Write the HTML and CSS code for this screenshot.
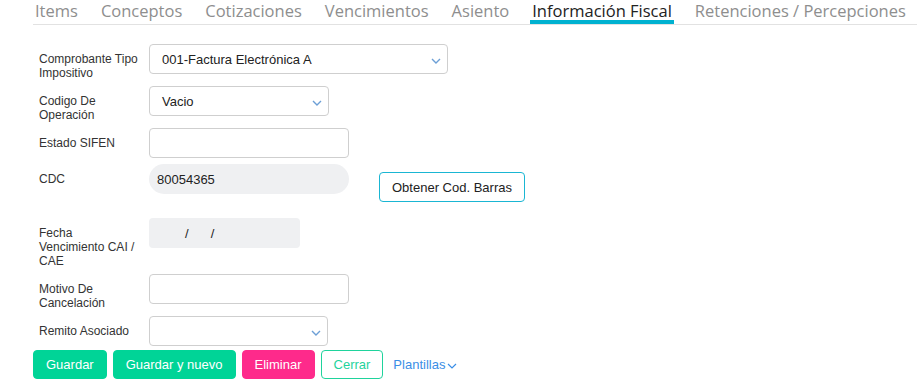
FILE: index.html
```html
<!DOCTYPE html>
<html lang="es">
<head>
<meta charset="utf-8">
<title>Información Fiscal</title>
<link rel="stylesheet" href="styles.css">
</head>
<body>
<div class="page">
  <nav class="tabs">
    <a class="tab">Items</a>
    <a class="tab">Conceptos</a>
    <a class="tab">Cotizaciones</a>
    <a class="tab">Vencimientos</a>
    <a class="tab">Asiento</a>
    <a class="tab active">Información Fiscal</a>
    <a class="tab">Retenciones / Percepciones</a>
  </nav>

  <div class="form">
    <div class="row">
      <label class="lbl">Comprobante Tipo Impositivo</label>
      <div class="field select w299">
        <span class="val">001-Factura Electrónica A</span>
        <svg class="chev" width="10" height="6" viewBox="0 0 10 6"><polyline points="1,1 5,5 9,1" fill="none" stroke="#6c9fd6" stroke-width="1.4"/></svg>
      </div>
    </div>
    <div class="row">
      <label class="lbl">Codigo De Operación</label>
      <div class="field select w180">
        <span class="val">Vacio</span>
        <svg class="chev" width="10" height="6" viewBox="0 0 10 6"><polyline points="1,1 5,5 9,1" fill="none" stroke="#6c9fd6" stroke-width="1.4"/></svg>
      </div>
    </div>
    <div class="row">
      <label class="lbl">Estado SIFEN</label>
      <div class="field w200"></div>
    </div>
    <div class="row row-cdc">
      <label class="lbl">CDC</label>
      <div class="field pill w200"><span class="val">80054365</span></div>
      <button class="btn-outline-cyan">Obtener Cod. Barras</button>
    </div>
    <div class="row">
      <label class="lbl">Fecha Vencimiento CAI / CAE</label>
      <div class="field filled w151"><span class="slash s1">/</span><span class="slash s2">/</span></div>
    </div>
    <div class="row">
      <label class="lbl">Motivo De Cancelación</label>
      <div class="field w200"></div>
    </div>
    <div class="row">
      <label class="lbl">Remito Asociado</label>
      <div class="field select w179">
        <span class="val"></span>
        <svg class="chev" width="10" height="6" viewBox="0 0 10 6"><polyline points="1,1 5,5 9,1" fill="none" stroke="#6c9fd6" stroke-width="1.4"/></svg>
      </div>
    </div>
  </div>

  <div class="actions">
    <button class="btn green">Guardar</button>
    <button class="btn green">Guardar y nuevo</button>
    <button class="btn pink">Eliminar</button>
    <button class="btn outline-green">Cerrar</button>
    <a class="link">Plantillas<svg class="lchev" width="10" height="6" viewBox="0 0 10 6"><polyline points="1,1 5,5 9,1" fill="none" stroke="#3a8ee6" stroke-width="1.2"/></svg></a>
  </div>
</div>
</body>
</html>
```

FILE: styles.css
```css
* { box-sizing: border-box; }
html, body { margin: 0; padding: 0; background: #fff; }
body { font-family: "Liberation Sans", Arial, sans-serif; color: #333; }

.page { padding-left: 33px; }

.tabs {
  display: flex;
  gap: 19px;
  height: 25px;
  border-bottom: 1px solid #e2e2e2;
  font-family: "Open Sans", "Noto Sans", sans-serif;
  font-size: 16.5px;
}
.tab {
  display: block;
  height: 24px;
  padding: 0 2px;
  line-height: 22px;
  color: #8e8e8e;
  white-space: nowrap;
}
.tab.active {
  color: #222;
  box-shadow: inset 0 -4px 0 #00b1d0;
}

.form {
  display: flex;
  flex-direction: column;
  gap: 6px;
  padding-top: 19px;
}
.row { display: flex; align-items: flex-start; }
.row-cdc { margin-bottom: 10px; }

.lbl {
  width: 101px;
  margin-left: 6px;
  margin-right: 9px;
  padding-top: 8px;
  font-size: 12px;
  line-height: 14px;
  color: #333;
}

.field {
  position: relative;
  height: 30px;
  border: 1px solid #cfcfcf;
  border-radius: 4px;
  background: #fff;
  display: flex;
  align-items: center;
  padding-left: 12px;
  font-size: 13px;
  color: #222;
}
.select { justify-content: space-between; padding-right: 6px; }
.chev { margin-top: 3px; }
.pill {
  border: none;
  border-radius: 15px;
  background: #eff0f2;
  padding-left: 8px;
}
.filled {
  border: none;
  background: #eff0f2;
  padding-left: 36px;
}
.slash { font-size: 13px; color: #222; }
.s2 { margin-left: 22px; }

.w299 { width: 299px; }
.w180 { width: 180px; }
.w179 { width: 179px; }
.w200 { width: 200px; }
.w151 { width: 151px; }

.btn-outline-cyan {
  margin-left: 30px;
  margin-top: 8px;
  height: 30px;
  padding: 0 12px;
  border: 1px solid #1ab6d3;
  border-radius: 4px;
  background: #fff;
  font-family: "Liberation Sans", Arial, sans-serif;
  font-size: 13px;
  color: #222;
}

.actions {
  display: flex;
  align-items: center;
  gap: 6px;
  margin-top: 4px;
}
.btn {
  height: 29px;
  padding: 0 12px;
  border: 1px solid transparent;
  border-radius: 4px;
  font-family: "Liberation Sans", Arial, sans-serif;
  font-size: 13px;
  color: #fff;
}
.green { background: #00d497; border-color: #00d497; }
.pink { background: #fe2a8b; border-color: #fe2a8b; }
.outline-green { background: #fff; border-color: #1fd39c; color: #1fd39c; }
.link {
  margin-left: 4px;
  font-size: 13px;
  color: #3a8ee6;
  display: flex;
  align-items: center;
  gap: 2px;
}
.lchev { margin-top: 2px; }
```
